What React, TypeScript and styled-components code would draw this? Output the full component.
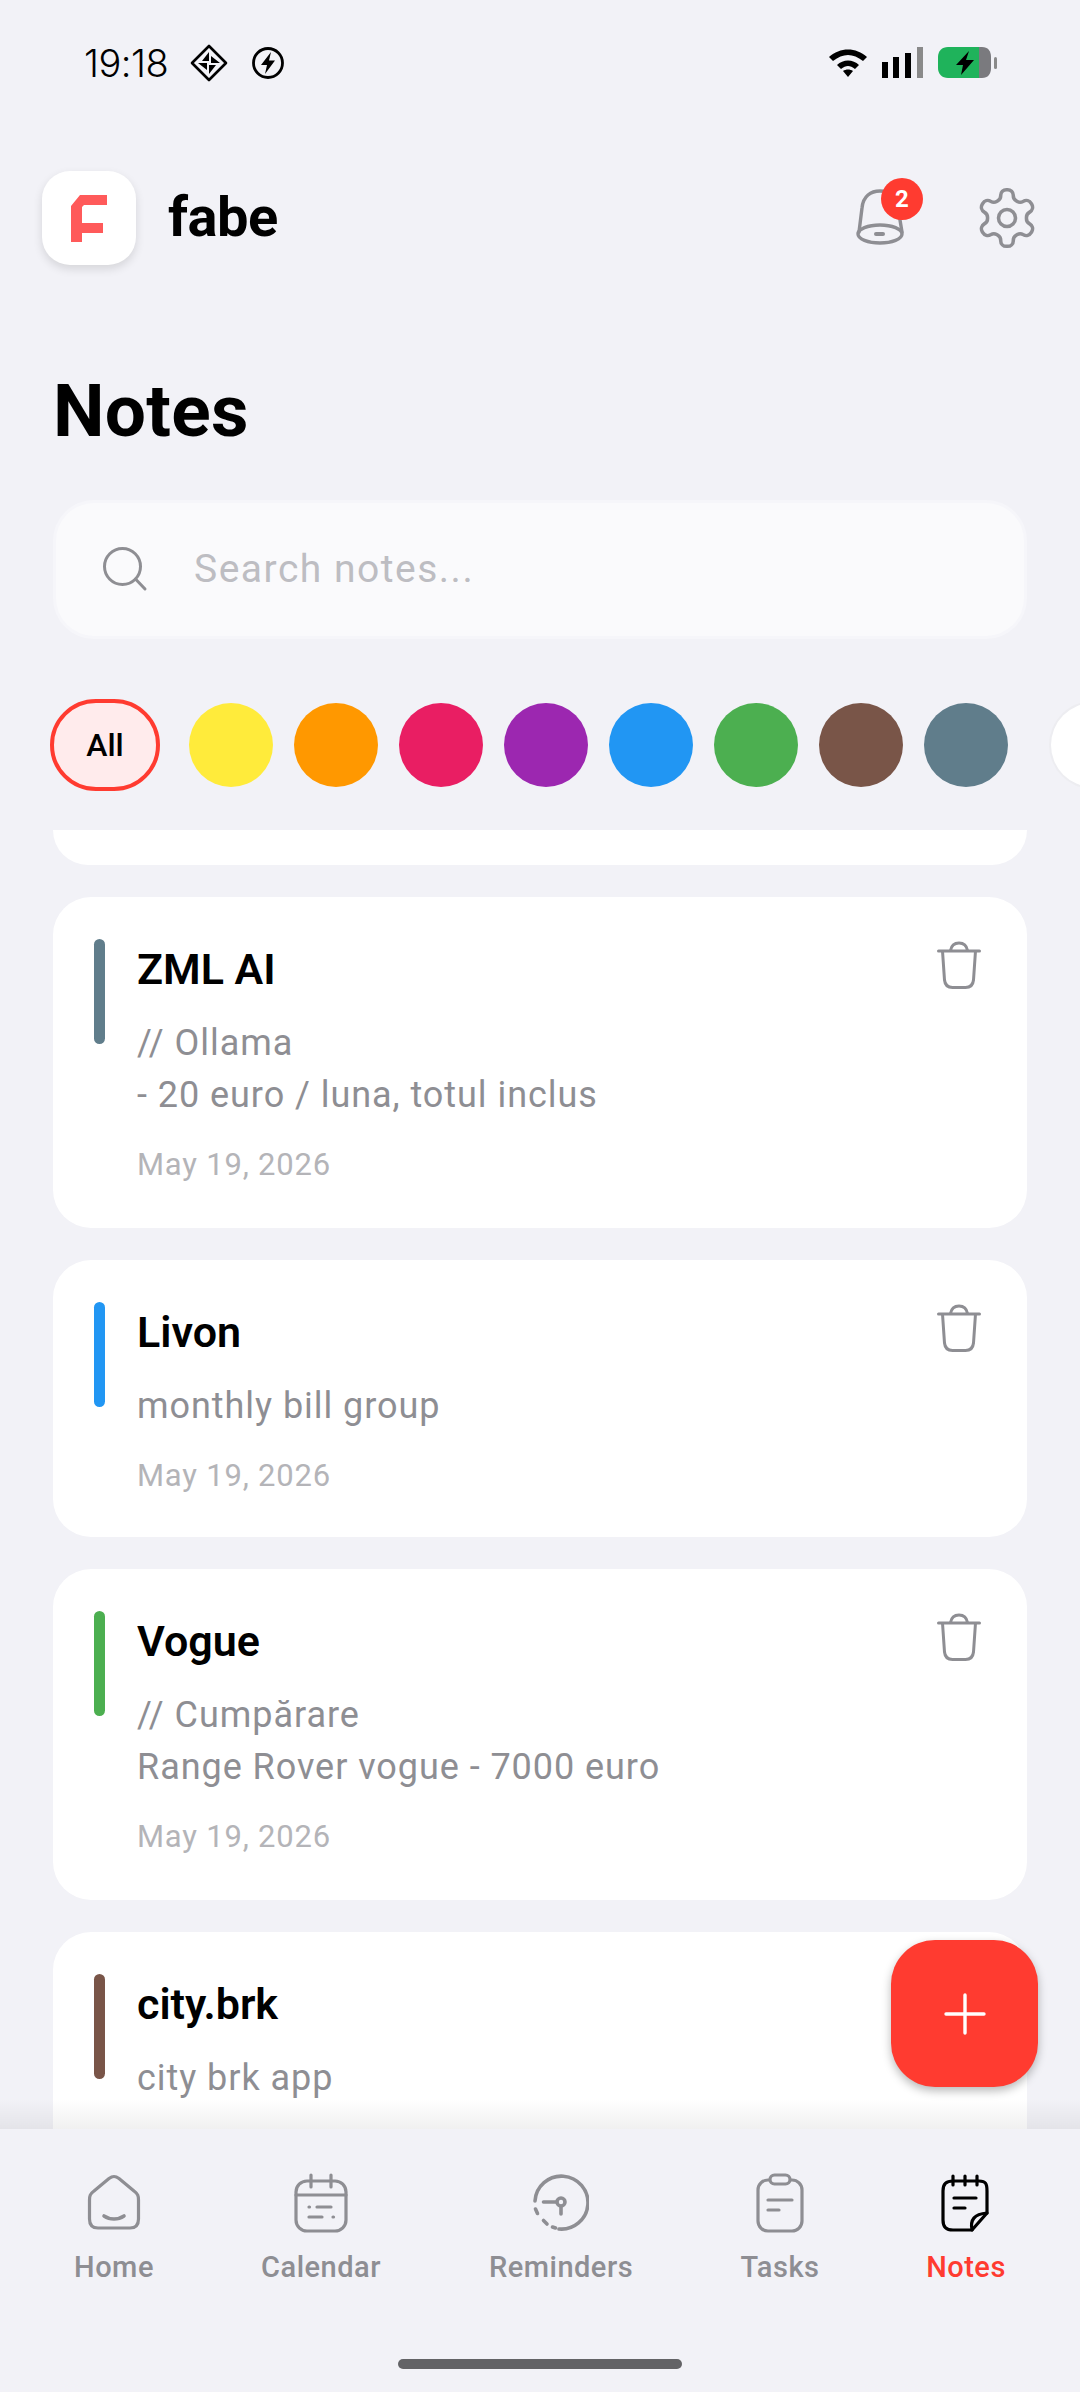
import React from 'react'
import styled, { createGlobalStyle } from 'styled-components'

const GlobalStyle = createGlobalStyle`
  html, body { margin: 0; padding: 0; background: #F2F2F7; }
  * { box-sizing: border-box; }
`

const Screen = styled.div`
  position: relative;
  width: 1080px;
  height: 2392px;
  overflow: hidden;
  background: #F2F2F7;
  font-family: Roboto, "Liberation Sans", sans-serif;
  display: flex;
  flex-direction: column;
`

const StatusBar = styled.div`
  height: 62px;
  margin-top: 32px;
  padding: 0 82px 0 84px;
  display: flex;
  align-items: center;
  justify-content: space-between;
  flex: none;
`

const StatusLeft = styled.div`
  display: flex;
  align-items: center;
`

const Clock = styled.span`
  font-family: Inter, Roboto, sans-serif;
  font-size: 38px;
  font-weight: 300;
  color: #000;
  width: 106px;
  letter-spacing: -0.5px;
`

const StatusRight = styled.div`
  display: flex;
  align-items: center;
  gap: 14px;
`

const Header = styled.div`
  margin-top: 76px;
  height: 96px;
  padding: 0 39px 0 42px;
  display: flex;
  align-items: center;
  flex: none;
`

const LogoBox = styled.div`
  width: 94px;
  height: 94px;
  border-radius: 28px;
  background: #fff;
  box-shadow: 0 4px 10px rgba(0, 0, 0, 0.12);
  display: flex;
  align-items: center;
  justify-content: center;
`

const Brand = styled.span`
  margin: -2px 0 0 32px;
  font-size: 56px;
  font-weight: 700;
  color: #000;
  letter-spacing: -0.5px;
  flex: 1;
`

const BellWrap = styled.div`
  position: relative;
  width: 64px;
  height: 64px;
  margin-right: 61px;
`

const Badge = styled.span`
  position: absolute;
  top: -8px;
  right: -11px;
  width: 42px;
  height: 42px;
  border-radius: 50%;
  background: #FF3B30;
  color: #fff;
  font-size: 24px;
  font-weight: 700;
  display: flex;
  align-items: center;
  justify-content: center;
`

const Title = styled.h1`
  margin: 103px 0 0 53px;
  font-size: 73px;
  line-height: 84px;
  letter-spacing: 0.3px;
  font-weight: 700;
  color: #000;
  flex: none;
`

const SearchBar = styled.div`
  margin: 50px 56px 0 56px;
  height: 133px;
  border-radius: 38px;
  background: #FAFAFC;
  box-shadow: 0 0 0 3px #F6F6FA;
  display: flex;
  align-items: center;
  padding-left: 47px;
  flex: none;
`

const SearchText = styled.span`
  margin: -2px 0 0 45px;
  font-size: 39px;
  letter-spacing: 1.5px;
  color: #BDBDC2;
`

const Swatches = styled.div`
  margin-top: 63px;
  height: 92px;
  padding-left: 50px;
  display: flex;
  align-items: center;
  flex: none;
`

const AllChip = styled.div`
  width: 110px;
  height: 92px;
  border-radius: 46px;
  border: 4px solid #FF3B30;
  background: #FFEBEC;
  color: #000;
  font-size: 32px;
  font-weight: 500;
  display: flex;
  align-items: center;
  justify-content: center;
  margin-right: 29px;
  flex: none;
`

const Swatch = styled.div<{ $color: string }>`
  width: 84px;
  height: 84px;
  border-radius: 50%;
  background: ${p => p.$color};
  margin-right: 21px;
  flex: none;
`

const WhiteSwatch = styled(Swatch)`
  margin-left: 22px;
  box-shadow: 0 0 0 2px #EDEDF1;
`

const Notes = styled.div`
  margin-top: 39px;
  flex: 1;
  min-height: 0;
  overflow: hidden;
  padding: 0 53px;
  display: flex;
  flex-direction: column;
  gap: 32px;
`

const ClippedCard = styled.div`
  height: 35px;
  flex: none;
  background: #fff;
  border-radius: 0 0 36px 36px;
`

const Card = styled.div<{ $height: number }>`
  position: relative;
  height: ${p => p.$height}px;
  flex: none;
  background: #fff;
  border-radius: 38px;
  padding: 47px 0 0 84px;
`

const Stripe = styled.div<{ $color: string }>`
  position: absolute;
  left: 41px;
  top: 42px;
  width: 11px;
  height: 105px;
  border-radius: 6px;
  background: ${p => p.$color};
`

const CardTitle = styled.div`
  font-size: 43px;
  line-height: 50px;
  font-weight: 600;
  color: #000;
`

const CardBody = styled.div`
  margin-top: 23px;
  font-size: 36px;
  line-height: 52px;
  letter-spacing: 0.95px;
  color: #8E8E93;
`

const CardDate = styled.div`
  margin-top: 26px;
  font-size: 31px;
  line-height: 36px;
  letter-spacing: 0.8px;
  color: #B4B4B8;
`

const Trash = styled.div`
  position: absolute;
  top: 44px;
  right: 46px;
  width: 44px;
  height: 48px;
`

const Fab = styled.div`
  position: absolute;
  left: 891px;
  top: 1940px;
  width: 147px;
  height: 147px;
  border-radius: 44px;
  background: #FF3B30;
  box-shadow: 0 4px 10px rgba(0, 0, 0, 0.28);
  display: flex;
  align-items: center;
  justify-content: center;
`

const BottomNav = styled.div`
  flex: none;
  height: 263px;
  background: #F2F2F7;
  position: relative;
  &::before {
    content: '';
    position: absolute;
    left: 0;
    right: 0;
    top: -30px;
    height: 30px;
    background: linear-gradient(to bottom, rgba(0, 0, 0, 0), rgba(0, 0, 0, 0.06));
  }
`

const NavItem = styled.div<{ $x: number }>`
  position: absolute;
  top: 44px;
  left: ${p => p.$x}px;
  width: 0;
  display: flex;
  flex-direction: column;
  align-items: center;
`

const NavLabel = styled.span<{ $active?: boolean }>`
  margin-top: 17px;
  font-size: 29px;
  line-height: 34px;
  letter-spacing: 0.5px;
  font-weight: 500;
  white-space: nowrap;
  color: ${p => (p.$active ? '#FF3B30' : '#8E8E93')};
`

const HomeIndicator = styled.div`
  position: absolute;
  left: 398px;
  top: 2359px;
  width: 284px;
  height: 10px;
  border-radius: 5px;
  background: #636366;
`

const gray = '#8E8E93'

const NavSvg = ({ children, color = gray }: { children: React.ReactNode; color?: string }) => (
  <svg width="56" height="60" viewBox="0 0 56 60" fill="none" stroke={color} strokeWidth="3.2" strokeLinecap="round" strokeLinejoin="round">
    {children}
  </svg>
)

const TrashIcon = () => (
  <svg width="44" height="48" viewBox="0 0 44 48" fill="none" stroke={gray} strokeWidth="3">
    <path d="M1.500 10 H42.500" strokeLinecap="round" />
    <path d="M13.500 9.500 C14.500 4 17 2 22 2 C27 2 29.500 4 30.500 9.500" />
    <path d="M5.500 10 L7.500 39 C8 44 10.500 46.500 15.500 46.500 H28.500 C33.500 46.500 36 44 36.500 39 L38.500 10" />
  </svg>
)

type Note = { title: string; lines: string[]; date?: string; color: string; height: number }

// last card runs under the nav, its date is not on screen
const notes: Note[] = [
  { title: 'ZML AI', lines: ['// Ollama', '- 20 euro / luna, totul inclus'], date: 'May 19, 2026', color: '#607D8B', height: 331 },
  { title: 'Livon', lines: ['monthly bill group'], date: 'May 19, 2026', color: '#2196F3', height: 277 },
  { title: 'Vogue', lines: ['// Cumpărare', 'Range Rover vogue - 7000 euro'], date: 'May 19, 2026', color: '#4CAF50', height: 331 },
  { title: 'city.brk', lines: ['city brk app'], color: '#795548', height: 331 },
]

const swatches = ['#FFEB3B', '#FF9800', '#E91E63', '#9C27B0', '#2196F3', '#4CAF50', '#795548', '#607D8B']

export default function App() {
  return (
    <Screen>
      <GlobalStyle />
      <StatusBar>
        <StatusLeft>
          <Clock>19:18</Clock>
          <svg width="38" height="38" viewBox="0 0 38 38">
            <path d="M19 2 L36 19 L19 36 L2 19 Z" fill="none" stroke="#000" strokeWidth="2.6" strokeLinejoin="round" />
            <path d="M19 8 L19 17 L12 17 Z M30 19 L21 19 L21 12 Z M19 30 L19 21 L26 21 Z M8 19 L17 19 L17 26 Z" fill="#000" />
          </svg>
          <svg width="34" height="34" viewBox="0 0 34 34" style={{ marginLeft: 23 }}>
            <circle cx="17" cy="17" r="14.500" fill="none" stroke="#000" strokeWidth="2.800" />
            <path d="M20 6 L10 19 H16 L14 28 L24 14.500 H18 Z" fill="#000" />
          </svg>
        </StatusLeft>
        <StatusRight>
          <svg width="40" height="30" viewBox="0 0 40 30">
            <path d="M1 9 C12 -1 28 -1 39 9 L35 13 C25 5 15 5 5 13 Z M9 17 C15 11 25 11 31 17 L27 21 C22 17 18 17 13 21 Z M15 23 C18 21 22 21 25 23 L20 29 Z" fill="#000" />
          </svg>
          <svg width="42" height="32" viewBox="0 0 42 32">
            <rect x="0" y="15" width="6" height="16" fill="#000" />
            <rect x="11" y="10" width="6" height="21" fill="#000" />
            <rect x="23" y="6" width="6" height="25" fill="#000" />
            <rect x="35" y="0" width="6" height="31" fill="#8A8A8A" />
          </svg>
          <svg width="60" height="32" viewBox="0 0 60 32">
            <path d="M10 0 H42 V31 H10 C4 31 0 27 0 21 V10 C0 4 4 0 10 0 Z" fill="#1FB35B" />
            <path d="M41 0 H44 C50 0 53 4 53 10 V21 C53 27 50 31 44 31 H41 Z" fill="#7A7A7E" />
            <rect x="56" y="10" width="3" height="12" rx="1.500" fill="#8A8A8A" />
            <path d="M31 4 L18 18 H25 L23 28 L36 13 H28 Z" fill="#000" />
          </svg>
        </StatusRight>
      </StatusBar>

      <Header>
        <LogoBox>
          <svg width="36" height="47" viewBox="0 0 36 47" fill="#FF5A5A">
            <path d="M9 0 H36 V10 H13 L11 12 V28 H32 V38 H11 V47 H0 V11 Z" />
          </svg>
        </LogoBox>
        <Brand>fabe</Brand>
        <BellWrap>
          <svg width="64" height="64" viewBox="0 0 64 64" fill="none" stroke={gray} strokeWidth="3.400" strokeLinecap="round">
            <path d="M11 46 L14 22 C15 10 23 5 32 5 C41 5 49 10 50 22 L54 46" />
            <ellipse cx="32" cy="48" rx="22" ry="9" />
            <path d="M28 48 H35" strokeWidth="4" />
          </svg>
          <Badge>2</Badge>
        </BellWrap>
        <svg width="68" height="68" viewBox="0 0 24 24" fill="none" stroke={gray} strokeWidth="1.250" strokeLinecap="round" strokeLinejoin="round">
          <path d="M12.220 2h-.44a2 2 0 0 0-2 2v.18a2 2 0 0 1-1 1.730l-.43.25a2 2 0 0 1-2 0l-.15-.080a2 2 0 0 0-2.730.730l-.22.380a2 2 0 0 0 .730 2.730l.15.100a2 2 0 0 1 1 1.720v.510a2 2 0 0 1-1 1.740l-.15.090a2 2 0 0 0-.730 2.730l.22.380a2 2 0 0 0 2.730.730l.15-.080a2 2 0 0 1 2 0l.43.250a2 2 0 0 1 1 1.730V20a2 2 0 0 0 2 2h.44a2 2 0 0 0 2-2v-.18a2 2 0 0 1 1-1.730l.43-.25a2 2 0 0 1 2 0l.15.080a2 2 0 0 0 2.730-.730l.22-.390a2 2 0 0 0-.730-2.730l-.15-.080a2 2 0 0 1-1-1.740v-.5a2 2 0 0 1 1-1.740l.15-.090a2 2 0 0 0 .730-2.730l-.22-.380a2 2 0 0 0-2.730-.730l-.15.080a2 2 0 0 1-2 0l-.43-.250a2 2 0 0 1-1-1.730V4a2 2 0 0 0-2-2z" />
          <circle cx="12" cy="12" r="3" />
        </svg>
      </Header>

      <Title>Notes</Title>

      <SearchBar>
        <svg width="46" height="46" viewBox="0 0 46 46" fill="none" stroke={gray} strokeWidth="3">
          <circle cx="19.500" cy="19.500" r="18" />
          <path d="M32.500 32 L42 42" strokeLinecap="round" />
        </svg>
        <SearchText>Search notes...</SearchText>
      </SearchBar>

      <Swatches>
        <AllChip>All</AllChip>
        {swatches.map(c => (
          <Swatch key={c} $color={c} />
        ))}
        <WhiteSwatch $color="#fff" />
      </Swatches>

      <Notes>
        <ClippedCard />
        {notes.map(n => (
          <Card key={n.title} $height={n.height}>
            <Stripe $color={n.color} />
            <CardTitle>{n.title}</CardTitle>
            <CardBody>
              {n.lines.map(l => (
                <div key={l}>{l}</div>
              ))}
            </CardBody>
            {n.date && <CardDate>{n.date}</CardDate>}
            <Trash>
              <TrashIcon />
            </Trash>
          </Card>
        ))}
      </Notes>

      <BottomNav>
        <NavItem $x={114}>
          <NavSvg>
            <path d="M28 3.500 C26 3.500 25 4 23 5.500 L8 18 C4 21 3.500 23 3.500 27 V46 C3.500 52 6 55 12 55 H44 C50 55 52.500 52 52.500 46 V27 C52.500 23 52 21 48 18 L33 5.500 C31 4 30 3.500 28 3.500 Z" />
            <path d="M18 43 C24 47 32 47 38 43" strokeWidth="3.600" />
          </NavSvg>
          <NavLabel>Home</NavLabel>
        </NavItem>
        <NavItem $x={321}>
          <NavSvg>
            <rect x="3" y="8" width="50" height="50" rx="11" />
            <path d="M3 22 H53 M18 2 V14 M38 2 V14 M24 34 H38 M16 34 H16.500 M16 44 H29 M40 44 H40.500" />
          </NavSvg>
          <NavLabel>Calendar</NavLabel>
        </NavItem>
        <NavItem $x={561}>
          <NavSvg>
            <g strokeWidth="3.600">
              <path d="M26 56 A 26.500 26.500 0 1 0 2 28" />
              <path d="M2.500 36 L4.500 40.500 M10.500 47.500 L14 51 M19.500 54 L22.500 55" />
              <circle cx="28" cy="29" r="4" />
              <path d="M10.500 29 H23 M28 33.500 V41" />
            </g>
          </NavSvg>
          <NavLabel>Reminders</NavLabel>
        </NavItem>
        <NavItem $x={780}>
          <NavSvg>
            <rect x="6" y="7" width="44" height="51" rx="10" />
            <rect x="18" y="2" width="20" height="9" rx="4.500" fill="#F2F2F7" />
            <path d="M16 27 H40 M16 37 H27" />
          </NavSvg>
          <NavLabel>Tasks</NavLabel>
        </NavItem>
        <NavItem $x={966}>
          <NavSvg color="#000">
            <path d="M34 57 H15 C8 57 5 54 5 47 V18 C5 11 8 8 15 8 H41 C48 8 49 11 49 18 V40 L34 57 Z" />
            <path d="M15 3 V12 M27 3 V12 M39 3 V12 M16 25 H38 M16 35 H27" />
            <path d="M34 57 C32 47 36 41 49 40" />
          </NavSvg>
          <NavLabel $active>Notes</NavLabel>
        </NavItem>
      </BottomNav>

      <Fab>
        <svg width="42" height="42" viewBox="0 0 42 42" stroke="#fff" strokeWidth="3.400" strokeLinecap="round">
          <path d="M21 2 V40 M2 21 H40" />
        </svg>
      </Fab>
      <HomeIndicator />
    </Screen>
  )
}
